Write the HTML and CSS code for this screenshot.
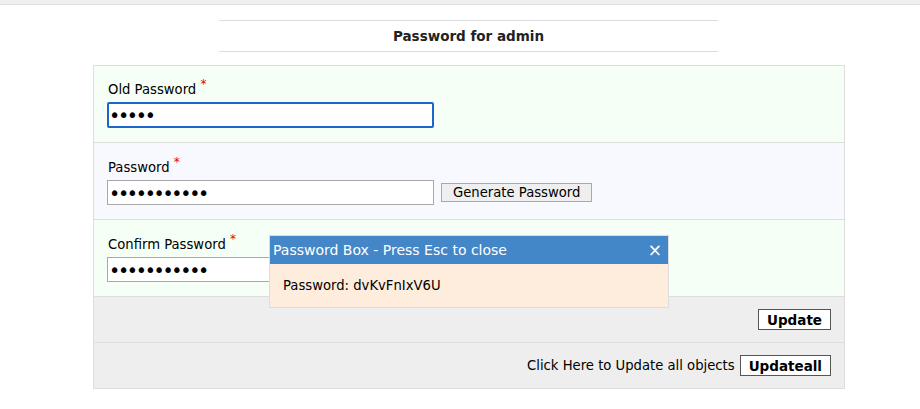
FILE: index.html
```html
<!DOCTYPE html>
<html>
<head>
<meta charset="utf-8">
<link rel="stylesheet" href="styles.css">
</head>
<body>
<div class="topbar"></div>
<div class="page">
  <div class="title">Password for admin</div>
  <div class="form">
    <div class="row green">
      <div class="label">Old Password <span class="req">*</span></div>
      <div class="field"><input class="inp focus" type="password" value="abcde"></div>
    </div>
    <div class="row blue">
      <div class="label">Password <span class="req">*</span></div>
      <div class="field"><input class="inp" type="password" value="abcdefghijk"><button class="gen">Generate Password</button></div>
    </div>
    <div class="row green">
      <div class="label">Confirm Password <span class="req">*</span></div>
      <div class="field"><input class="inp" type="password" value="abcdefghijk"></div>
    </div>
    <div class="row gray">
      <button class="act">Update</button>
    </div>
    <div class="row gray">
      <span class="hint">Click Here to Update all objects</span><button class="act">Updateall</button>
    </div>
    <div class="popup">
      <div class="phead"><span>Password Box - Press Esc to close</span><span class="close">×</span></div>
      <div class="pbody">Password: dvKvFnIxV6U</div>
    </div>
  </div>
</div>
</body>
</html>
```
FILE: styles.css
```css
html, body { margin: 0; padding: 0; background: #fff; }
body { font-family: "DejaVu Sans", Verdana, sans-serif; font-size: 13.2px; color: #000; }
.topbar { height: 4px; background: #efefef; border-bottom: 1px solid #e0e0e0; }
.page { padding-left: 93px; width: 752px; padding-top: 15px; }
.title {
  margin-left: 126px; width: 499px; height: 30px;
  border-top: 1px solid #dcdcdc; border-bottom: 1px solid #dcdcdc;
  display: flex; align-items: center; justify-content: center;
  font-weight: bold; font-size: 13.5px; color: #222;
}
.form { margin-top: 13px; border: 1px solid #dedede; position: relative; }
.row { border-top: 1px solid #dedede; box-sizing: border-box; }
.row:first-child { border-top: none; }
.green { background: #f6fff6; }
.blue { background: #f8f8ff; }
.row.green, .row.blue { height: 77px; padding: 17px 0 0 13px; }
.row.green:first-child { height: 76px; padding-top: 16px; }
.gray {
  background: #eeeeee; height: 46px; display: flex; align-items: center;
  justify-content: flex-end; padding-right: 13px;
}
.label { line-height: 16px; height: 16px; margin-left: 1px; }
.req { color: #e00; font-size: 12px; position: relative; top: -6px; }
.field { margin-top: 4px; display: flex; align-items: center; }
.inp {
  width: 327px; height: 25px; box-sizing: border-box; margin: 0;
  border: 1px solid #a9a9a9; background: #fff; padding: 0 1px;
  font-family: "DejaVu Sans", sans-serif; font-size: 19px; letter-spacing: -2.3px;
}
.inp.focus { border: 2px solid #1a66cc; border-radius: 2px; outline: none; height: 26px; padding: 0; }
.gen {
  margin-left: 7px; height: 19px; padding: 0 11px;
  background: #efefef; border: 1px solid #a9a9a9; border-radius: 0;
  font-family: "DejaVu Sans", sans-serif; font-size: 13.2px; color: #000;
}
.act {
  height: 21px; padding: 0 8px; background: #fff; border: 1px solid #555; border-radius: 0;
  font-family: "DejaVu Sans", sans-serif; font-size: 13.5px; font-weight: bold; color: #000;
}
.hint { margin-right: 5px; }
.popup {
  position: absolute; left: 175px; top: 169px; width: 400px;
  border: 1px solid #ddd; background: #feeddd; box-sizing: border-box;
}
.phead {
  background: #4387c9; color: #fff; height: 28px; display: flex; align-items: center;
  justify-content: space-between; padding: 0 6px 0 3px; font-size: 14px;
}
.close { font-size: 17px; }
.pbody { height: 43px; padding-left: 13px; display: flex; align-items: center; font-size: 13.2px; }
```
